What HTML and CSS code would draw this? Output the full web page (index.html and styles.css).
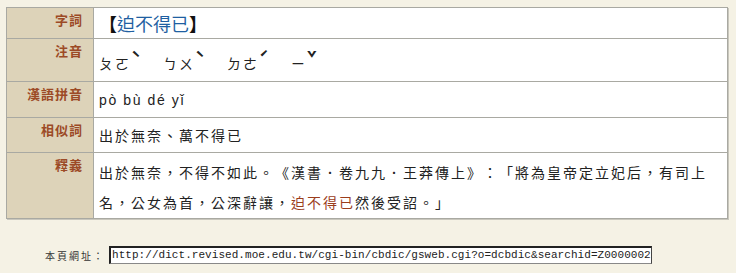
FILE: index.html
```html
<!DOCTYPE html>
<html lang="zh-Hant">
<head>
<meta charset="utf-8">
<title>迫不得已</title>
<link rel="stylesheet" href="styles.css">
</head>
<body>
<div class="page">
  <table class="dict">
    <tr class="row-word">
      <th>字詞</th>
      <td><span class="br">【</span><span class="word">迫不得已</span><span class="br">】</span></td>
    </tr>
    <tr class="row-zy">
      <th>注音</th>
      <td><span class="zy">ㄆㄛ<span class="tone">ˋ</span></span><span class="zy">ㄅㄨ<span class="tone">ˋ</span></span><span class="zy">ㄉㄜ<span class="tone">ˊ</span></span><span class="zy">ㄧ<span class="tone">ˇ</span></span></td>
    </tr>
    <tr class="row-py">
      <th>漢語拼音</th>
      <td class="py">pò bù dé yǐ</td>
    </tr>
    <tr class="row-sim">
      <th>相似詞</th>
      <td>出於無奈、萬不得已</td>
    </tr>
    <tr class="row-def">
      <th>釋義</th>
      <td>出於無奈，不得不如此。《漢書．卷九九．王莽傳上》：「將為皇帝定立妃后，有司上名，公女為首，公深辭讓，<span class="hl">迫不得已</span>然後受詔。」</td>
    </tr>
  </table>
  <div class="url-row">
    <span class="url-label">本頁網址：</span>
    <div class="url-box"><span class="url-text">http://dict.revised.moe.edu.tw/cgi-bin/cbdic/gsweb.cgi?o=dcbdic&amp;searchid=Z0000002</span></div>
  </div>
</div>
</body>
</html>
```

FILE: styles.css
```css
html, body {
  margin: 0;
  padding: 0;
  background: #f5f2e5;
}

.page {
  padding: 7px 0 0 6px;
  font-family: "Noto Sans CJK TC", "Noto Sans", sans-serif;
  color: #222;
  text-spacing-trim: space-all;
  font-kerning: none;
}

.dict {
  width: 722px;
  border-collapse: collapse;
  border: 1px solid #a9a9a2;
  box-shadow: 1px 1px 0 #c9c7bd;
  background: #fff;
}

.dict th {
  width: 76px;
  background: #ddd3b9;
  color: #9c4a26;
  font-size: 13px;
  font-weight: bold;
  letter-spacing: 1px;
  text-align: right;
  vertical-align: top;
  padding: 3px 10px 0 0;
  line-height: 18px;
  border: 1px solid #a9a9a2;
}

.dict td {
  padding: 0 10px 0 5px;
  border: 1px solid #a9a9a2;
  font-size: 14px;
  letter-spacing: 2px;
  line-height: 30px;
  vertical-align: middle;
  color: #222;
}

.row-word { height: 31px; }
.row-word td {
  font-size: 18px;
  letter-spacing: 0;
  line-height: 24px;
}
.br { color: #111; font-weight: bold; }
.word { color: #1f5fa2; }

.row-zy { height: 43px; }
.row-zy td { padding-top: 6px; }
.zy {
  display: inline-block;
  width: 64px;
  letter-spacing: 2px;
}
.tone {
  display: inline-block;
  width: 16px;
  font-size: 16px;
  font-weight: bold;
  vertical-align: 5px;
  line-height: 10px;
}

.row-py { height: 36px; }
.py {
  font-family: "Liberation Sans", "Noto Sans", sans-serif;
  letter-spacing: 1.6px !important;
}

.row-sim { height: 35px; }

.row-def { height: 66px; }
.row-def td { padding-top: 2px; }
.hl { color: #9b3d1c; }

.url-row {
  display: flex;
  align-items: center;
  margin-top: 27px;
  padding-left: 39px;
}

.url-label {
  font-size: 10px;
  letter-spacing: 2px;
  color: #333;
  width: 64px;
}

.url-box {
  display: flex;
  align-items: center;
  width: 540px;
  height: 15px;
  background: #fff;
  border-top: 2px solid #222;
  border-left: 2px solid #222;
  border-right: 1px solid #444;
  border-bottom: 1px solid #888;
  white-space: nowrap;
}

.url-text {
  font-family: "Liberation Mono", monospace;
  font-size: 11px;
  letter-spacing: 0.05px;
  line-height: 15px;
  color: #222;
  padding-left: 1px;
}
```
